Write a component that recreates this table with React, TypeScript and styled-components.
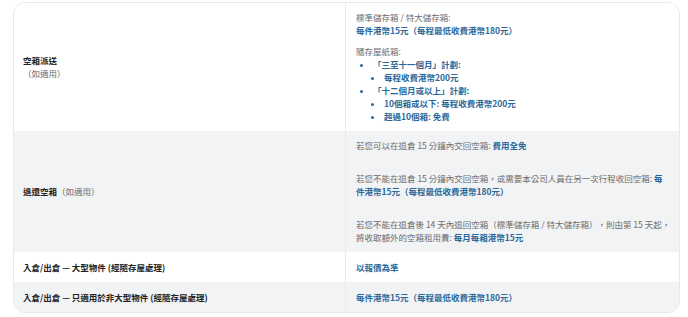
import React from 'react';
import styled, { createGlobalStyle } from 'styled-components';

const GlobalStyle = createGlobalStyle`
  body {
    margin: 0;
    background: #ffffff;
    font-family: "Noto Sans CJK TC", "Noto Sans", sans-serif;
  }
`;

const Page = styled.div`
  padding: 2px 8px 0 13px;
`;

const Table = styled.div`
  width: 667px;
  border: 1px solid #e6e8eb;
  border-radius: 12px;
  overflow: hidden;
  box-sizing: border-box;
`;

const Row = styled.div<{ $shade?: boolean }>`
  display: grid;
  grid-template-columns: 332px 1fr;
  min-height: 30px;
  background: ${({ $shade }) => ($shade ? '#f2f3f5' : '#ffffff')};
`;

const Label = styled.div`
  display: flex;
  flex-direction: column;
  justify-content: center;
  padding: 8px 9px;
  border-right: 1px solid #e9ebee;
  font-size: 8.5px;
  line-height: 13px;
  font-weight: 700;
  color: #222222;
`;

const Note = styled.span`
  font-weight: 400;
  color: #6b6b6b;
`;

const Value = styled.div`
  display: flex;
  flex-direction: column;
  justify-content: center;
  padding: 8px 9px 8px 10px;
  font-size: 8.5px;
  line-height: 13px;
  color: #6b6b6b;
`;

const Para = styled.div<{ $gap?: number }>`
  margin: ${({ $gap }) => $gap ?? 0}px 0 0;
`;

const Line = styled.span`
  white-space: nowrap;
`;

const Price = styled.span`
  font-weight: 700;
  color: #2c6899;
`;

const List = styled.ul<{ $nested?: boolean }>`
  margin: 0;
  padding-left: ${({ $nested }) => ($nested ? 11 : 17)}px;
  list-style: disc;
  color: #2c6899;
  font-weight: 700;
`;

export default function App() {
  return (
    <Page>
      <GlobalStyle />
      <Table>
        <Row>
          <Label>
            空箱派送
            <Note>（如適用）</Note>
          </Label>
          <Value>
            <Para>
              標準儲存箱 / 特大儲存箱:
              <br />
              <Price>每件港幣15元（每程最低收費港幣180元）</Price>
            </Para>
            <Para $gap={8}>
              隨存屋紙箱:
              <List>
                <li>
                  「三至十一個月」計劃:
                  <List $nested>
                    <li>每程收費港幣200元</li>
                  </List>
                </li>
                <li>
                  「十二個月或以上」計劃:
                  <List $nested>
                    <li>10個箱或以下: 每程收費港幣200元</li>
                    <li>超過10個箱: 免費</li>
                  </List>
                </li>
              </List>
            </Para>
          </Value>
        </Row>
        <Row $shade>
          <Label>
            <span>
              退還空箱<Note>（如適用）</Note>
            </span>
          </Label>
          <Value>
            <Para>
              若您可以在退倉 15 分鐘內交回空箱: <Price>費用全免</Price>
            </Para>
            <Para $gap={20}>
              若您不能在退倉 15 分鐘內交回空箱，或需要本公司人員在另一次行程收回空箱:{' '}
              <Price>每件港幣15元（每程最低收費港幣180元）</Price>
            </Para>
            <Para $gap={20}>
              <Line>若您不能在退倉後 14 天內退回空箱（標準儲存箱 / 特大儲存箱），則由第 15 天起，</Line>
              <br />
              將收取額外的空箱租用費: <Price>每月每箱港幣15元</Price>
            </Para>
          </Value>
        </Row>
        <Row>
          <Label>入倉/出倉 — 大型物件 (經隨存屋處理)</Label>
          <Value>
            <Price>以報價為準</Price>
          </Value>
        </Row>
        <Row $shade>
          <Label>入倉/出倉 — 只適用於非大型物件 (經隨存屋處理)</Label>
          <Value>
            <Price>每件港幣15元（每程最低收費港幣180元）</Price>
          </Value>
        </Row>
      </Table>
    </Page>
  );
}
